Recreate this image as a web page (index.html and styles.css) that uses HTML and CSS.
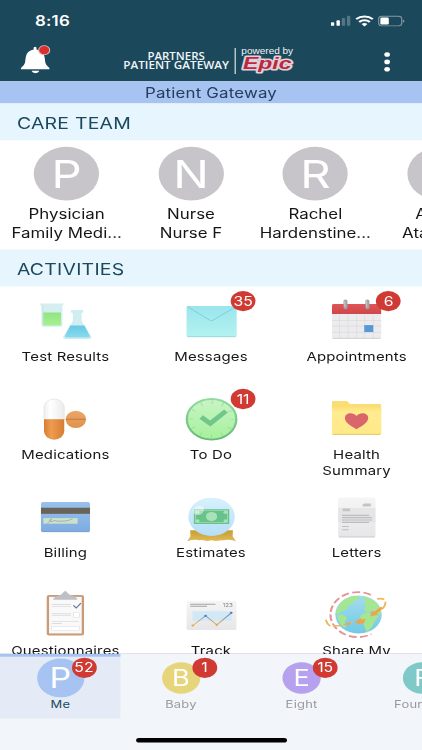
FILE: index.html
```
<!DOCTYPE html>
<html lang="en">
<head>
<meta charset="UTF-8">
<meta name="viewport" content="width=device-width, initial-scale=1">
<title>Patient Gateway</title>
<link rel="stylesheet" href="styles.css">
</head>
<body>

<!-- shared gradients for the activity icons -->
<svg class="defs" width="0" height="0">
  <defs>
    <linearGradient id="green" x2="0" y2="1"><stop stop-color="#91e482"/><stop offset="1" stop-color="#a8f08f"/></linearGradient>
    <linearGradient id="blue" x2="0" y2="1"><stop stop-color="#6bc7e3"/><stop offset="1" stop-color="#87dced"/></linearGradient>
    <linearGradient id="aqua" x2="0" y2="1"><stop stop-color="#9be5ed"/><stop offset="1" stop-color="#b3f2f0"/></linearGradient>
    <linearGradient id="red" x2="0" y2="1"><stop stop-color="#e05558"/><stop offset="1" stop-color="#cc474b"/></linearGradient>
    <linearGradient id="white" x2="1" y2="0"><stop stop-color="#eeeeef"/><stop offset=".3" stop-color="#fff"/><stop offset="1" stop-color="#ebebed"/></linearGradient>
    <linearGradient id="orange" x2="1" y2="0"><stop stop-color="#d77d32"/><stop offset=".35" stop-color="#ee9c50"/><stop offset="1" stop-color="#d67d34"/></linearGradient>
    <linearGradient id="orange-light" x2="0" y2="1"><stop stop-color="#eda665"/><stop offset="1" stop-color="#df914c"/></linearGradient>
    <linearGradient id="mint" x2="0" y2="1"><stop stop-color="#c9f4c5"/><stop offset="1" stop-color="#a5f19b"/></linearGradient>
    <linearGradient id="mint-edge" x2="0" y2="1"><stop stop-color="#8fdca2"/><stop offset="1" stop-color="#68b979"/></linearGradient>
    <linearGradient id="yellow" x2="0" y2="1"><stop stop-color="#fce17a"/><stop offset=".2" stop-color="#ffec91"/><stop offset="1" stop-color="#ffe987"/></linearGradient>
    <linearGradient id="card" x2="0" y2="1"><stop stop-color="#99c0ed"/><stop offset="1" stop-color="#7eacdf"/></linearGradient>
    <linearGradient id="gold" x2="0" y2="1"><stop stop-color="#c69c36"/><stop offset="1" stop-color="#e0bb57"/></linearGradient>
    <linearGradient id="glass" x2="0" y2="1"><stop stop-color="#d8f0fc"/><stop offset="1" stop-color="#b5dff8"/></linearGradient>
    <linearGradient id="paper" x2="0" y2="1"><stop stop-color="#f5f5f6"/><stop offset="1" stop-color="#e6e6e8"/></linearGradient>
    <linearGradient id="ocean" x2="0" y2="1"><stop stop-color="#a3dcf0"/><stop offset="1" stop-color="#72c9e4"/></linearGradient>
    <linearGradient id="trend" x2="0" y2="1"><stop offset=".2" stop-color="#668dc8"/><stop offset=".9" stop-color="#e3b054"/></linearGradient>
  </defs>
</svg>

<div class="screen">

  <header class="header">
    <div class="status-bar">
      <span class="time">8:16</span>
      <svg class="status-icons" width="66" height="14" viewBox="0 0 66 14">
        <g fill="#fff">
          <rect x="0" y="8" width="3" height="4" rx="1"/>
          <rect x="5" y="6" width="3" height="6" rx="1"/>
          <rect x="9.7" y="3.5" width="3" height="8.5" rx="1" opacity=".25"/>
          <rect x="14.3" y="1" width="3" height="11" rx="1" opacity=".25"/>
        </g>
        <g fill="none" stroke="#fff" stroke-width="2.2">
          <path d="M22.5 4.7a10.8 10.8 0 0 1 14.8 0"/>
          <path d="M25.2 7.9a6.8 6.8 0 0 1 9.4 0"/>
        </g>
        <path d="M27.3 10.1a3.8 3.8 0 0 1 5.2 0L29.9 12.8z" fill="#fff"/>
        <rect x="42.5" y="1.5" width="20.5" height="10.5" rx="2.8" fill="none" stroke="#fff" stroke-opacity=".45"/>
        <rect x="44" y="3" width="7.5" height="7.5" rx="1.3" fill="#fff"/>
        <path d="M64 5v3.600q1.400-.5 1.400-1.800T64 5z" fill="#fff" opacity=".45"/>
      </svg>
    </div>
    <div class="nav">
      <svg class="bell" width="28" height="34" viewBox="0 0 28 34">
        <path d="M12.9 3.5q1.2-2 2.5 0v2.2q6.2 1.5 7.2 8l.7 6.3q.4 2.800 3.600 5.500v1.600H1.600v-1.600q3.200-2.700 3.600-5.500l.7-6.300q.8-6.500 7-8z" fill="#fff"/>
        <path d="M11 28.600h7q-.8 2.600-3.500 2.600T11 28.600z" fill="#fff"/>
        <circle cx="22.300" cy="6.300" r="4.900" fill="#dc2f2b" stroke="#d8b4b6" stroke-width="1"/>
      </svg>
      <svg class="logo" width="156" height="36" viewBox="0 0 156 36">
        <g class="logo-name">
          <text x="23" y="17" textLength="51" lengthAdjust="spacingAndGlyphs">PARTNERS</text>
          <text x="1.500" y="27" textLength="94" lengthAdjust="spacingAndGlyphs">PATIENT GATEWAY</text>
        </g>
        <path d="M101 4v28" stroke="#e6edf0"/>
        <text class="logo-powered" x="106.500" y="11" textLength="46" lengthAdjust="spacingAndGlyphs">powered by</text>
        <text class="logo-epic" x="108" y="27" textLength="43" lengthAdjust="spacingAndGlyphs">Epic</text>
      </svg>
      <svg class="more" width="6" height="24" viewBox="0 0 6 24" fill="#fff">
        <circle cx="3" cy="4" r="2.500"/><circle cx="3" cy="12" r="2.500"/><circle cx="3" cy="20" r="2.500"/>
      </svg>
    </div>
  </header>

  <div class="page-title">Patient Gateway</div>

  <h2 class="section-title">CARE TEAM</h2>
  <div class="care-team">
    <div class="provider"><div class="avatar">P</div><div>Physician</div><div>Family Medi...</div></div>
    <div class="provider"><div class="avatar">N</div><div>Nurse</div><div>Nurse F</div></div>
    <div class="provider"><div class="avatar">R</div><div>Rachel</div><div>Hardenstine...</div></div>
    <div class="provider"><div class="avatar">A</div><div>Alison</div><div>Ataman...</div></div>
  </div>

  <h2 class="section-title">ACTIVITIES</h2>
  <main class="activities">

    <div class="activity">
      <svg class="icon" viewBox="0 0 48 48">
        <path d="M1 4.500h22l-1.500 3v20.500q0 1.800-1.800 1.800H4.600q-1.800 0-1.800-1.800V7.500z" fill="#d5eff0"/>
        <path d="M4.200 14.200h16v13.300q0 .9-.9.900H5.100q-.9 0-.9-.9z" fill="url(#green)"/>
        <path d="M4 6v21" stroke="#c3e5e7" fill="none"/>
        <path d="M29 11.700h11v2.500l-1.500.8v8.500l8.600 17q.8 2.600-1.700 2.600H24q-2.500 0-1.700-2.600L30.700 23.500V15l-1.700-.8z" fill="#d0edf1"/>
        <path d="M28.500 28.500h12.600l4.600 10.800q.6 2-1.200 2H25q-1.700 0-1.200-2z" fill="url(#blue)"/>
      </svg>
      <div class="label">Test Results</div>
    </div>

    <div class="activity">
      <svg class="icon" viewBox="0 0 48 48">
        <rect x="1.800" y="7.300" width="44.500" height="33.600" rx="1.500" fill="url(#aqua)"/>
        <path d="M2.500 8L22.700 22.700q1.300.9 2.600 0L45.700 8" fill="none" stroke="#77ccd7" stroke-width=".8"/>
        <path d="M2.500 40.500h43" stroke="#8ed5dc" stroke-width=".8"/>
      </svg>
      <span class="badge">35</span>
      <div class="label">Messages</div>
    </div>

    <div class="activity">
      <svg class="icon" viewBox="0 0 48 48">
        <rect x="2" y="6" width="43.700" height="36.700" rx="1.500" fill="#ececee"/>
        <path d="M2 16V6.700Q2 5.200 3.500 5.200h40.700q1.500 0 1.500 1.500V16z" fill="url(#red)"/>
        <path d="M2 23h43.700M2 29h43.700M2 35.800h43.700M8.700 17v25M16.400 17v25M24 17v25M31 17v25M38.700 17v25" stroke="#dadade" stroke-width=".7"/>
        <path d="M2.500 42.300h42.700" stroke="#cacace" stroke-width=".8"/>
        <rect x="30.700" y="28" width="8" height="7.500" fill="#5599d6"/>
        <path d="M14 2v7M33.500 2v7" stroke="#a3a4a8" stroke-width="3.600" stroke-linecap="round"/>
        <path d="M13.400 2v6M32.900 2v6" stroke="#c7c8ca" stroke-width="1" stroke-linecap="round"/>
      </svg>
      <span class="badge">6</span>
      <div class="label">Appointments</div>
    </div>

    <div class="activity">
      <svg class="icon" viewBox="0 0 48 48">
        <path d="M5.100 24.500V11a9 9 0 0 1 18 0v13.500z" fill="url(#white)" stroke="#dedee0" stroke-width=".6"/>
        <path d="M5.100 24h18v13a9 9 0 0 1-18 0z" fill="url(#orange)"/>
        <ellipse cx="33.400" cy="24" rx="9.100" ry="9.300" fill="url(#orange-light)"/>
        <path d="M24.600 23.900h17.600" stroke="#bc7845" stroke-width="1"/>
      </svg>
      <div class="label">Medications</div>
    </div>

    <div class="activity">
      <svg class="icon" viewBox="0 0 48 48">
        <circle cx="24" cy="24" r="22" fill="url(#mint)" stroke="url(#mint-edge)" stroke-width="2"/>
        <circle cx="24" cy="24" r="18.500" fill="none" stroke="#9bcf9e" stroke-width="4" stroke-dasharray=".7 8.987" stroke-dashoffset=".35"/>
        <path d="M14.800 21.500L22.800 28.600L36.800 15" fill="none" stroke="#72c689" stroke-width="4.800"/>
      </svg>
      <span class="badge">11</span>
      <div class="label">To Do</div>
    </div>

    <div class="activity">
      <svg class="icon" viewBox="0 0 48 48">
        <path d="M2 39.200V5.500q0-1.300 1.300-1.300h11.500q1 0 1.700 1l1.300 2.200h26.600q1.300 0 1.300 1.300v30.500q0 1.400-1.400 1.400H3.400Q2 40.600 2 39.200z" fill="#fadd75"/>
        <path d="M2 10.800h43.700v28.500q0 1.300-1.400 1.300H3.400Q2 40.600 2 39.300z" fill="url(#yellow)"/>
        <path d="M2.500 40.200h42.700" stroke="#dfc55f" stroke-width=".8"/>
        <path d="M23.800 34.600C18 30.500 13.500 27.300 13.500 22.500c0-6 7.300-6.800 10.300-2.200 3-4.600 10.400-3.800 10.400 2.200 0 4.800-4.600 8-10.400 12.100z" fill="#d8666b"/>
      </svg>
      <div class="label">Health<br>Summary</div>
    </div>

    <div class="activity">
      <svg class="icon" viewBox="0 0 48 48">
        <rect x="2.400" y="7.500" width="43.600" height="32.500" rx="1.800" fill="url(#card)"/>
        <rect x="2.400" y="13.700" width="43.600" height="6.600" fill="#696459"/>
        <rect x="4.500" y="24.900" width="30.500" height="6.100" fill="#cce1ca"/>
        <path d="M8 31q5-6 3.500-5.500-2.500 2.500-1 3t4-1l3 .8q6 .2 9-.7l4-2" fill="none" stroke="#8aa6a4" stroke-width=".7"/>
        <path d="M3 39.600h42.500" stroke="#6d9bd0" stroke-width=".7"/>
      </svg>
      <div class="label">Billing</div>
    </div>

    <div class="activity">
      <svg class="icon" viewBox="0 0 48 48">
        <path d="M5 38h38l-.3 6.500 3 5.500q-6-2.200-11-1.200-4 0-6.500.8-2 0-4.200-.8-2.200.8-4.200.8-3-1-6.500-.8-5-1-11 1.200L5.300 44.500z" fill="url(#gold)"/>
        <circle cx="24" cy="23.500" r="20.700" fill="url(#glass)"/>
        <rect x="8.300" y="15.300" width="31.400" height="16" fill="#67c38b"/>
        <rect x="9.800" y="16.900" width="28.400" height="12.800" fill="none" stroke="#a7dfb4" stroke-width=".7"/>
        <circle cx="24" cy="23.300" r="5" fill="#a9e1b8"/>
        <g fill="#a9e1b8"><circle cx="11.500" cy="18.500" r="1.900"/><circle cx="36.500" cy="18.500" r="1.900"/><circle cx="11.500" cy="28" r="1.900"/><circle cx="36.500" cy="28" r="1.900"/></g>
        <ellipse cx="12.500" cy="16.500" rx="4.500" ry="5.500" transform="rotate(35 12.500 16.500)" fill="#fff" opacity=".45"/>
      </svg>
      <div class="label">Estimates</div>
    </div>

    <div class="activity">
      <svg class="icon" viewBox="0 0 48 48">
        <rect x="7.500" y="2.500" width="33.200" height="43.300" rx="2" fill="url(#paper)"/>
        <path d="M7.500 14h33.200v15.500H7.500z" fill="#dedee0" opacity=".6"/>
        <path d="M29.500 10l1-1h6v3.300h-7.500zM11.500 14.500h6.500v3h-6.500z" fill="#c3c4c7"/>
        <path d="M11 22h24M11 24.500h26.500M11 27h26.500M11 29.500h24" stroke="#bcbdc0" stroke-width="1.300"/>
        <path d="M11 34h6M11 37.500h6" stroke="#bebfc2"/>
        <path d="M8 45.300h32.200" stroke="#c9c9cc" stroke-width=".8"/>
      </svg>
      <div class="label">Letters</div>
    </div>

    <div class="activity">
      <svg class="icon" viewBox="0 0 48 48">
        <rect x="7.500" y="2.300" width="33.200" height="43.700" rx="2" fill="#c99b77"/>
        <rect x="9.600" y="4.200" width="29" height="39.600" fill="#f9f9fa"/>
        <path d="M13.300 7.300q.2-3 5.200-4.800 2.800-.8 3.500-2.800 2-3.500 4 0 .8 2 3.500 2.800 5 1.800 5.300 4.800z" fill="#bfc0c3"/>
        <path d="M12 12.500h17M12 14.500h17M12 22.500h17M12 24.500h17M12 30.700h24M12 33h9" stroke="#dcdcdf" stroke-width="1"/>
        <rect x="31.500" y="21.500" width="5" height="5" fill="#fff" stroke="#d8d8db" stroke-width=".5"/>
        <rect x="12" y="36" width="24.500" height="4.700" fill="#fff" stroke="#d8d8db" stroke-width=".5"/>
        <path d="M31.200 13.500l2.500 2.700 4.200-5.200" fill="none" stroke="#64779c" stroke-width="1.100"/>
      </svg>
      <div class="label">Questionnaires</div>
    </div>

    <div class="activity">
      <svg class="icon" viewBox="0 0 48 48">
        <rect x="1.800" y="8.500" width="44.300" height="31.500" rx="1.500" fill="url(#paper)"/>
        <path d="M5 12.300h22.500M5 14.300h15" stroke="#a5a5a8" stroke-width="1.100"/>
        <text class="track-number" x="34" y="15.700">123</text>
        <rect x="7.100" y="19.700" width="34.700" height="10.400" fill="#d2e8f5"/>
        <path d="M7.400 35.200L18.700 24.700L28.700 34.500L41.500 21.500" fill="none" stroke="url(#trend)" stroke-width=".9"/>
        <g fill="#5b7dbb"><circle cx="18.700" cy="24.700" r="1.200"/><circle cx="41.500" cy="21.500" r="1.200"/></g>
        <g fill="#e5a846"><circle cx="7.400" cy="35.200" r="1.200"/><circle cx="28.700" cy="34.500" r="1.200"/></g>
      </svg>
      <div class="label">Track</div>
    </div>

    <div class="activity">
      <svg class="icon" viewBox="0 0 48 48">
        <path d="M36.500 2A24.300 24.300 0 1 0 37 44.500" fill="none" stroke="#e69595" stroke-width="2" stroke-dasharray="7 3"/>
        <circle cx="25.600" cy="23.300" r="21" fill="url(#ocean)" stroke="#fff" stroke-width=".8"/>
        <g fill="#a5e692">
          <path d="M9.500 10.500q5-6 12.500-7.500l5 1-2 3.500-4 .8-.5 3.700-4.500 1.800-1 4.200-4.500 2-3.500 3.500-1.500-3.500z"/>
          <path d="M31 3.800q9 3 12.800 10.500 2 4.500 2 9.500l-4.500-1.500-3-3.500-4 2-4-3 2-3.500-2.500-3 3-2.500-3.500-2z"/>
          <path d="M28.500 23l5-2.500 6 3.500 4.500.5-4 6-2.500 6.500-4.500 5.500-2.500-7-.5-5.500-3.500-3z"/>
          <path d="M6.500 24l5-1 4 4-2 4 1 7.500q-7.500-6-8-14.500z"/>
        </g>
        <path d="M-3.500 29q1 4.500 4 7M3 35.500l7 0M12.500 34.500l6.500-2M42 6.500q4-1 6.500.5M49.500 9.500q.3 4.500-3.200 8" fill="none" stroke="#edb75c" stroke-width="1.700"/>
        <path d="M22 31.700l6-4.700.3 2 3.700-1.200-1.800 5.200-2.500-.3-.2 1.300zM36 25.500l1.500-6.500 1.500 1.500 7-6 .8 2.500-5.300 5.500 2.500.5z" fill="#efa34b"/>
        <path d="M12 34l6.500-2.700-.5 3z" fill="#efa34b"/>
      </svg>
      <div class="label">Share My<br>Record</div>
    </div>
  </main>

  <footer class="footer">
    <div class="tabs">
      <div class="tab tab-active">
        <div class="tab-avatar blue">P</div><span class="badge">52</span><div class="tab-name">Me</div>
      </div>
      <div class="tab">
        <div class="tab-avatar yellow">B</div><span class="badge">1</span><div class="tab-name">Baby</div>
      </div>
      <div class="tab">
        <div class="tab-avatar purple">E</div><span class="badge">15</span><div class="tab-name">Eight</div>
      </div>
      <div class="tab">
        <div class="tab-avatar teal">F</div><div class="tab-name">Fourteen</div>
      </div>
    </div>
    <div class="home-bar"></div>
  </footer>
</div>

</body>
</html>
```

FILE: styles.css
```
* { box-sizing: border-box; }
html { height: 750px; overflow: hidden; }
body { margin: 0; width: 422px; height: 750px; overflow: hidden; background: #fff; font-family: Inter, sans-serif; color: #161616; }

/* 375x812 phone layout, fitted to the 422x750 window */
.screen { width: 375px; height: 812px; display: flex; flex-direction: column; overflow: hidden; transform: scale(1.12533, .92365); transform-origin: 0 0; }

.header { height: 88px; flex: none; background: #1c485c; color: #fff; }
.status-bar { height: 46px; display: flex; justify-content: space-between; padding: 0 15px 0 31px; }
.time { font-size: 15px; font-weight: 600; line-height: 46px; letter-spacing: .2px; }
.status-icons { margin-top: 16px; }
.nav { display: flex; align-items: flex-start; padding: 2px 28px 0 17px; }
.logo { margin-left: 63px; }
.logo-name { font-family: "Open Sans", sans-serif; font-size: 11px; font-weight: 600; fill: #f0f5f7; }
.logo-powered { font-family: "Liberation Sans", sans-serif; font-size: 9.5px; fill: #f0f5f7; }
.logo-epic { font-family: "Liberation Sans", sans-serif; font-size: 18px; font-weight: bold; font-style: italic; fill: #c0263f; stroke: #dcd3da; stroke-width: 3.5px; stroke-linejoin: round; paint-order: stroke; }
.more { margin: 7px 0 0 auto; }

.page-title { height: 24px; flex: none; background: #a6c3f1; color: #263d5c; font-size: 15px; line-height: 25px; letter-spacing: .15px; text-align: center; }
.section-title { height: 40px; flex: none; margin: 0; padding-left: 15px; background: #e7f6fe; color: #1c485c; font-size: 17.3px; font-weight: 400; line-height: 43px; letter-spacing: .2px; }

.care-team { height: 118px; flex: none; display: flex; padding: 7px 0 0 4px; }
.provider { width: 110.5px; flex: none; text-align: center; font-size: 15px; line-height: 21px; white-space: nowrap; }
.avatar { width: 58px; height: 58px; margin: 0 auto 4px; border-radius: 50%; background: #c7c5ca; color: #fff; font-size: 42px; line-height: 59px; }

.activities { flex: 1; min-height: 0; overflow: hidden; display: grid; grid-template-columns: repeat(3, 129.4px); grid-auto-rows: 106px; justify-content: center; }
.activity { position: relative; padding-top: 14px; text-align: center; }
.icon { display: block; width: 48px; height: 48px; margin: 0 auto; overflow: visible; }
.label { margin-top: 6px; font-size: 13.3px; line-height: 16.5px; letter-spacing: .15px; }
.badge { position: absolute; top: 5px; left: 50%; min-width: 22px; height: 22px; margin-left: 17.5px; border-radius: 11px; background: #d03a33; color: #fff; font-size: 14px; line-height: 22px; text-align: center; }
.track-number { font-size: 5.5px; fill: #85858a; }

.footer { height: 104.5px; flex: none; background: #f2f5f9; box-shadow: 0 -1px 0 #dfe2e7; }
.tabs { display: flex; height: 70.5px; }
.tab { position: relative; width: 107.2px; flex: none; padding-top: 9px; text-align: center; color: #999a9e; }
.tab-avatar { width: 34px; height: 34px; margin: 0 auto; border-radius: 50%; color: #fff; font-size: 24px; line-height: 35px; }
.tab-name { margin-top: 5.5px; font-size: 11.5px; line-height: 14px; letter-spacing: .2px; }
.tab .badge { top: 4px; margin-left: 10px; }
.tab-active { background: #e4ebf7; color: #1c485c; border-top: 3px solid #a6c3f1; padding-top: 2px; }
.tab-active .tab-avatar { width: 42px; height: 42px; font-size: 30px; line-height: 43px; }
.tab-active .tab-name { margin-top: 1.5px; }
.tab-active .badge { top: 1px; }
.blue { background: #a6c3f1; }
.yellow { background: #e7d57b; }
.purple { background: #b6a1ee; }
.teal { background: #7fcac9; }

.home-bar { width: 134px; height: 5px; margin: 20.5px auto 0; border-radius: 3px; background: #000; }
.defs { display: block; }
```
